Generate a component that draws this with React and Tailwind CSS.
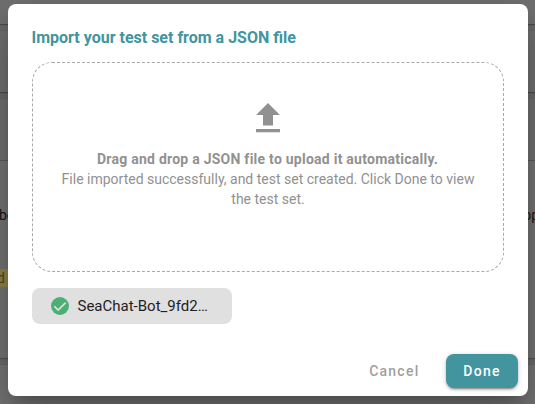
function Backdrop() {
  return (
    <div className="col-start-1 row-start-1 flex h-[404px] flex-col gap-[7px] overflow-hidden bg-[#6b6b6b] text-sm text-[#161616]">
      <div className="h-6 shrink-0 bg-[#717171] shadow-[0_1px_1px_#4c4c4c]" />
      <div className="h-[61px] shrink-0 bg-[#717171] shadow-[0_1px_1px_#4c4c4c,0_0_1px_#5a5a5a]" />
      <div className="flex h-[259px] shrink-0 flex-col bg-[#757575] shadow-[0_1px_1px_#555,0_0_1px_#5a5a5a]">
        <div className="h-[62px] border-b border-[#5c5c5c] bg-[#717171]" />
        <div className="mt-11 flex h-5 items-center justify-between leading-5">
          <span className="-ml-px">bo</span>
          <span className="-mr-1">op</span>
        </div>
        <div className="mt-[44px] flex h-[18px] w-5 items-center bg-[#91844a] leading-[18px] text-[#51451a]">
          <span className="-ml-[3px]">d</span>
        </div>
      </div>
      <div className="h-12 shrink-0 bg-[#757575] shadow-[0_0_1px_#5a5a5a]" />
    </div>
  );
}

function UploadIcon() {
  return (
    <svg viewBox="0 0 24 30" className="h-[30px] w-6 fill-[#919191]">
      <path d="M12 0 24 12H17V22.5H7V12H0ZM0 26H24V29.3H0Z" />
    </svg>
  );
}

function CheckIcon() {
  return (
    <svg viewBox="2 2 20 20" className="h-[18px] w-[18px] shrink-0 fill-[#4caf74]">
      <circle cx="12" cy="12" r="10" />
      <path d="m5.700 12.300 4.300 4.300 8.300-8.300" fill="none" stroke="#e0e0e0" strokeWidth="1.900" />
    </svg>
  );
}

export default function App() {
  return (
    <div className="grid h-[404px] w-[535px] overflow-hidden font-['Roboto',sans-serif]">
      <Backdrop />
      <section className="z-10 col-start-1 row-start-1 mt-1 ml-2 flex h-[392px] w-[520px] flex-col rounded-lg bg-white shadow-[0_11px_15px_-7px_rgba(0,0,0,0.2),0_24px_38px_3px_rgba(0,0,0,0.14),0_9px_46px_8px_rgba(0,0,0,0.12)]">
        <h1 className="mt-[22px] ml-[23.5px] h-6 text-base leading-6 font-bold text-[#42949e]">
          Import your test set from a JSON file
        </h1>
        <div className="mx-6 mt-3 flex h-[210px] flex-col items-center rounded-[20px] border border-dashed border-[#a9a9a9] px-6 pt-10 text-center text-sm leading-5 text-[#919191]">
          <UploadIcon />
          <p className="mt-4 mr-px font-bold tracking-[0.25px]">Drag and drop a JSON file to upload it automatically.</p>
          <p>File imported successfully, and test set created. Click Done to view the test set.</p>
        </div>
        <div className="mt-4 ml-6 flex h-9 w-[200px] items-center rounded-lg bg-[#e0e0e0] pl-[19px] text-[#1e1e1e]">
          <CheckIcon />
          <span className="ml-[8.5px] text-[15px] leading-5">SeaChat-Bot_9fd2…</span>
        </div>
        <div className="mt-[30px] mr-[10px] flex items-center justify-end gap-[10px] text-sm font-medium tracking-[1.25px]">
          <button className="h-[34px] px-[16.5px] text-[#9f9f9f]">Cancel</button>
          <button className="h-[34px] w-[72px] rounded-lg bg-[#42949e] text-white shadow-[0_3px_1px_-2px_rgba(0,0,0,0.2),0_2px_2px_rgba(0,0,0,0.14),0_1px_5px_rgba(0,0,0,0.2)]">
            Done
          </button>
        </div>
      </section>
    </div>
  );
}
